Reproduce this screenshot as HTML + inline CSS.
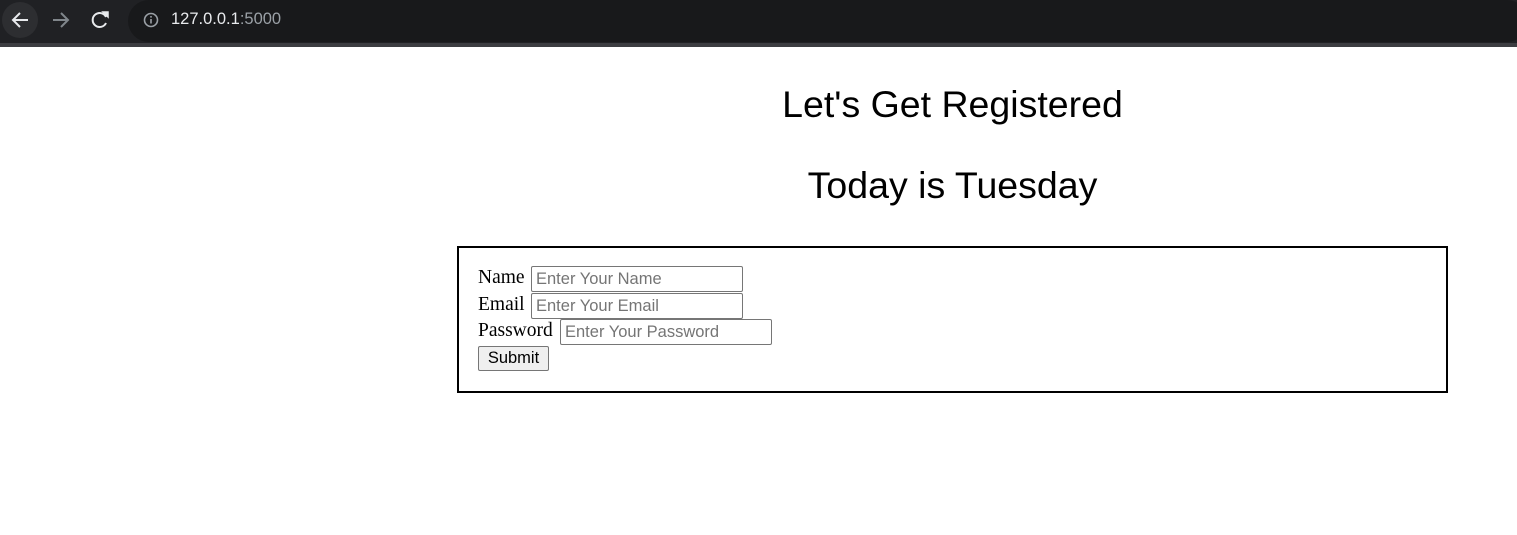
<!DOCTYPE html>
<html><head><style>
body{margin:0;width:1517px;height:535px;background:#fff;position:relative;overflow:hidden;font-family:"Liberation Serif",serif}
.bar{position:absolute;left:0;top:0;width:1517px;height:43px;background:#202124}
.line{position:absolute;left:0;top:43px;width:1517px;height:4px;background:#3c3d41}
.url{position:absolute;left:128px;top:0;width:1400px;height:42px;background:#18191b;border-radius:21px}
.h{position:absolute;left:457px;width:991px;text-align:center;font-family:"Liberation Sans",sans-serif;font-size:37.5px;color:#000}
.box{position:absolute;left:457px;top:246px;width:987px;height:143px;border:2px solid #000}
.lbl{position:absolute;font-size:19.5px;color:#000}
.in{position:absolute;border:1px solid #767676;border-radius:2px;font-family:"Liberation Sans",sans-serif;font-size:16.5px;color:#757575;line-height:24px;padding-left:4px;box-sizing:border-box;height:26px;width:212px}
.btn{position:absolute;left:478px;top:346px;width:71px;height:25px;box-sizing:border-box;border:1px solid #767676;border-radius:2px;background:#efefef;font-family:"Liberation Sans",sans-serif;font-size:16.5px;text-align:center;line-height:23px}
</style></head><body>
<div class="bar"></div><div class="line"></div>
<div class="url"></div>
<div style="position:absolute;left:2px;top:2px;width:36px;height:36px;border-radius:18px;background:#2d2e31"></div>
<svg style="position:absolute;left:0;top:0" width="300" height="42">
<path d="M28 20H13M20 13l-7 7 7 7" stroke="#e8eaed" stroke-width="2" fill="none"/>
<path d="M53 20h15M61 13l7 7-7 7" stroke="#80868b" stroke-width="2" fill="none"/>
<path d="M106 17a7 7 0 1 0 0 6" stroke="#e8eaed" stroke-width="2" fill="none"/><path d="M103 12l5 0 0 5z" fill="#e8eaed" stroke="#e8eaed" stroke-width="1.5"/>
<circle cx="151" cy="20" r="6.5" stroke="#9aa0a6" stroke-width="1.6" fill="none"/><rect x="150.2" y="19" width="1.6" height="4.5" fill="#9aa0a6"/><rect x="150.2" y="16" width="1.6" height="1.6" fill="#9aa0a6"/>
</svg>
<div style="position:absolute;left:171px;top:10px;font-family:'Liberation Sans',sans-serif;font-size:16.5px;color:#e8eaed">127.0.0.1<span style="color:#9aa0a6">:5000</span></div>
<div class="h" style="top:83px">Let's Get Registered</div>
<div class="h" style="top:164px">Today is Tuesday</div>
<div class="box"></div>
<div class="lbl" style="left:478px;top:267px">Name</div>
<div class="in" style="left:531px;top:266px">Enter Your Name</div>
<div class="lbl" style="left:478px;top:294px">Email</div>
<div class="in" style="left:531px;top:293px">Enter Your Email</div>
<div class="lbl" style="left:478px;top:320px">Password</div>
<div class="in" style="left:560px;top:319px">Enter Your Password</div>
<div class="btn">Submit</div>
</body></html>
